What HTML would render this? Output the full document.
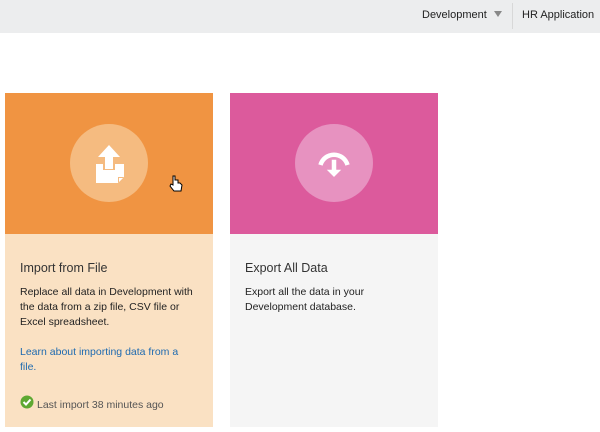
<!DOCTYPE html>
<html><head><style>
body{margin:0;width:600px;height:432px;background:#fff;font-family:"Liberation Sans",sans-serif;position:relative;overflow:hidden}
.hdr{position:absolute;left:0;top:0;width:600px;height:33px;background:#ecedee}
.hdr span{position:absolute;top:9px;font-size:11px;color:#222}
.card{position:absolute;top:93px;width:208px;height:334px}
.top{height:141px;position:relative}
.circ{position:absolute;left:65px;top:31px;width:78px;height:78px;border-radius:50%}
.t{position:absolute;left:15px;top:168px;font-size:12.5px;color:#333}
.b{position:absolute;left:15px;top:192px;width:180px;font-size:10.5px;line-height:15px;color:#222}
</style></head><body>
<div class="hdr"><span style="left:422px">Development</span>
<svg style="position:absolute;left:494px;top:11px" width="8" height="6"><path d="M0 0H8L4 6Z" fill="#888"/></svg>
<div style="position:absolute;left:512px;top:3px;width:1px;height:26px;background:#d8d8d8"></div>
<span style="left:522px">HR Application</span></div>

<div class="card" style="left:5px;background:#fae1c3">
<div class="top" style="background:#f09442">
<div class="circ" style="background:#f5bb80"></div>
<svg style="position:absolute;left:65px;top:31px" width="78" height="78">
<path d="M26 40H54V53L48 59H26Z" fill="#fff"/>
<path d="M48 53H54L48 59Z" fill="#f5bb80"/>
<path d="M49 54H53L49 58Z" fill="#fff"/>
<rect x="33" y="38" width="12" height="8" fill="#f5bb80"/>
<path d="M39 21L28 33H35V45H43V33H50Z" fill="#fff"/>
</svg>
<svg style="position:absolute;left:164px;top:82px" width="14" height="18"><path d="M4 1V10L2 9 1 11 5 16H12L13 10 11 8 9 8V5L7 5 6 5V1Z" fill="#fff" stroke="#000" stroke-width="1"/></svg>
</div>
<div class="t">Import from File</div>
<div class="b">Replace all data in Development with the data from a zip file, CSV file or Excel spreadsheet.<br><br><span style="color:#1e6ab0">Learn about importing data from a<br>file.</span></div>
<svg style="position:absolute;left:15px;top:302px" width="14" height="14"><circle cx="7" cy="7" r="6.5" fill="#5ea832"/><path d="M3.5 7L6 9.5 10.5 4.5" stroke="#fff" stroke-width="2" fill="none"/></svg>
<div style="position:absolute;left:32px;top:306px;font-size:10.5px;color:#555">Last import 38 minutes ago</div>
</div>

<div class="card" style="left:230px;background:#f5f5f5">
<div class="top" style="background:#dc5a9c">
<div class="circ" style="background:#e792c0"></div>
<svg style="position:absolute;left:65px;top:31px" width="78" height="78">
<path d="M25.5 41A14 14 0 0 1 52.5 41" stroke="#fff" stroke-width="4.5" fill="none"/>
<path d="M36 35H42V45H48L39 54 30 45H36Z" fill="#fff" stroke="#e792c0" stroke-width="1.5"/>
</svg>
</div>
<div class="t">Export All Data</div>
<div class="b">Export all the data in your<br>Development database.</div>
</div>
</body></html>
